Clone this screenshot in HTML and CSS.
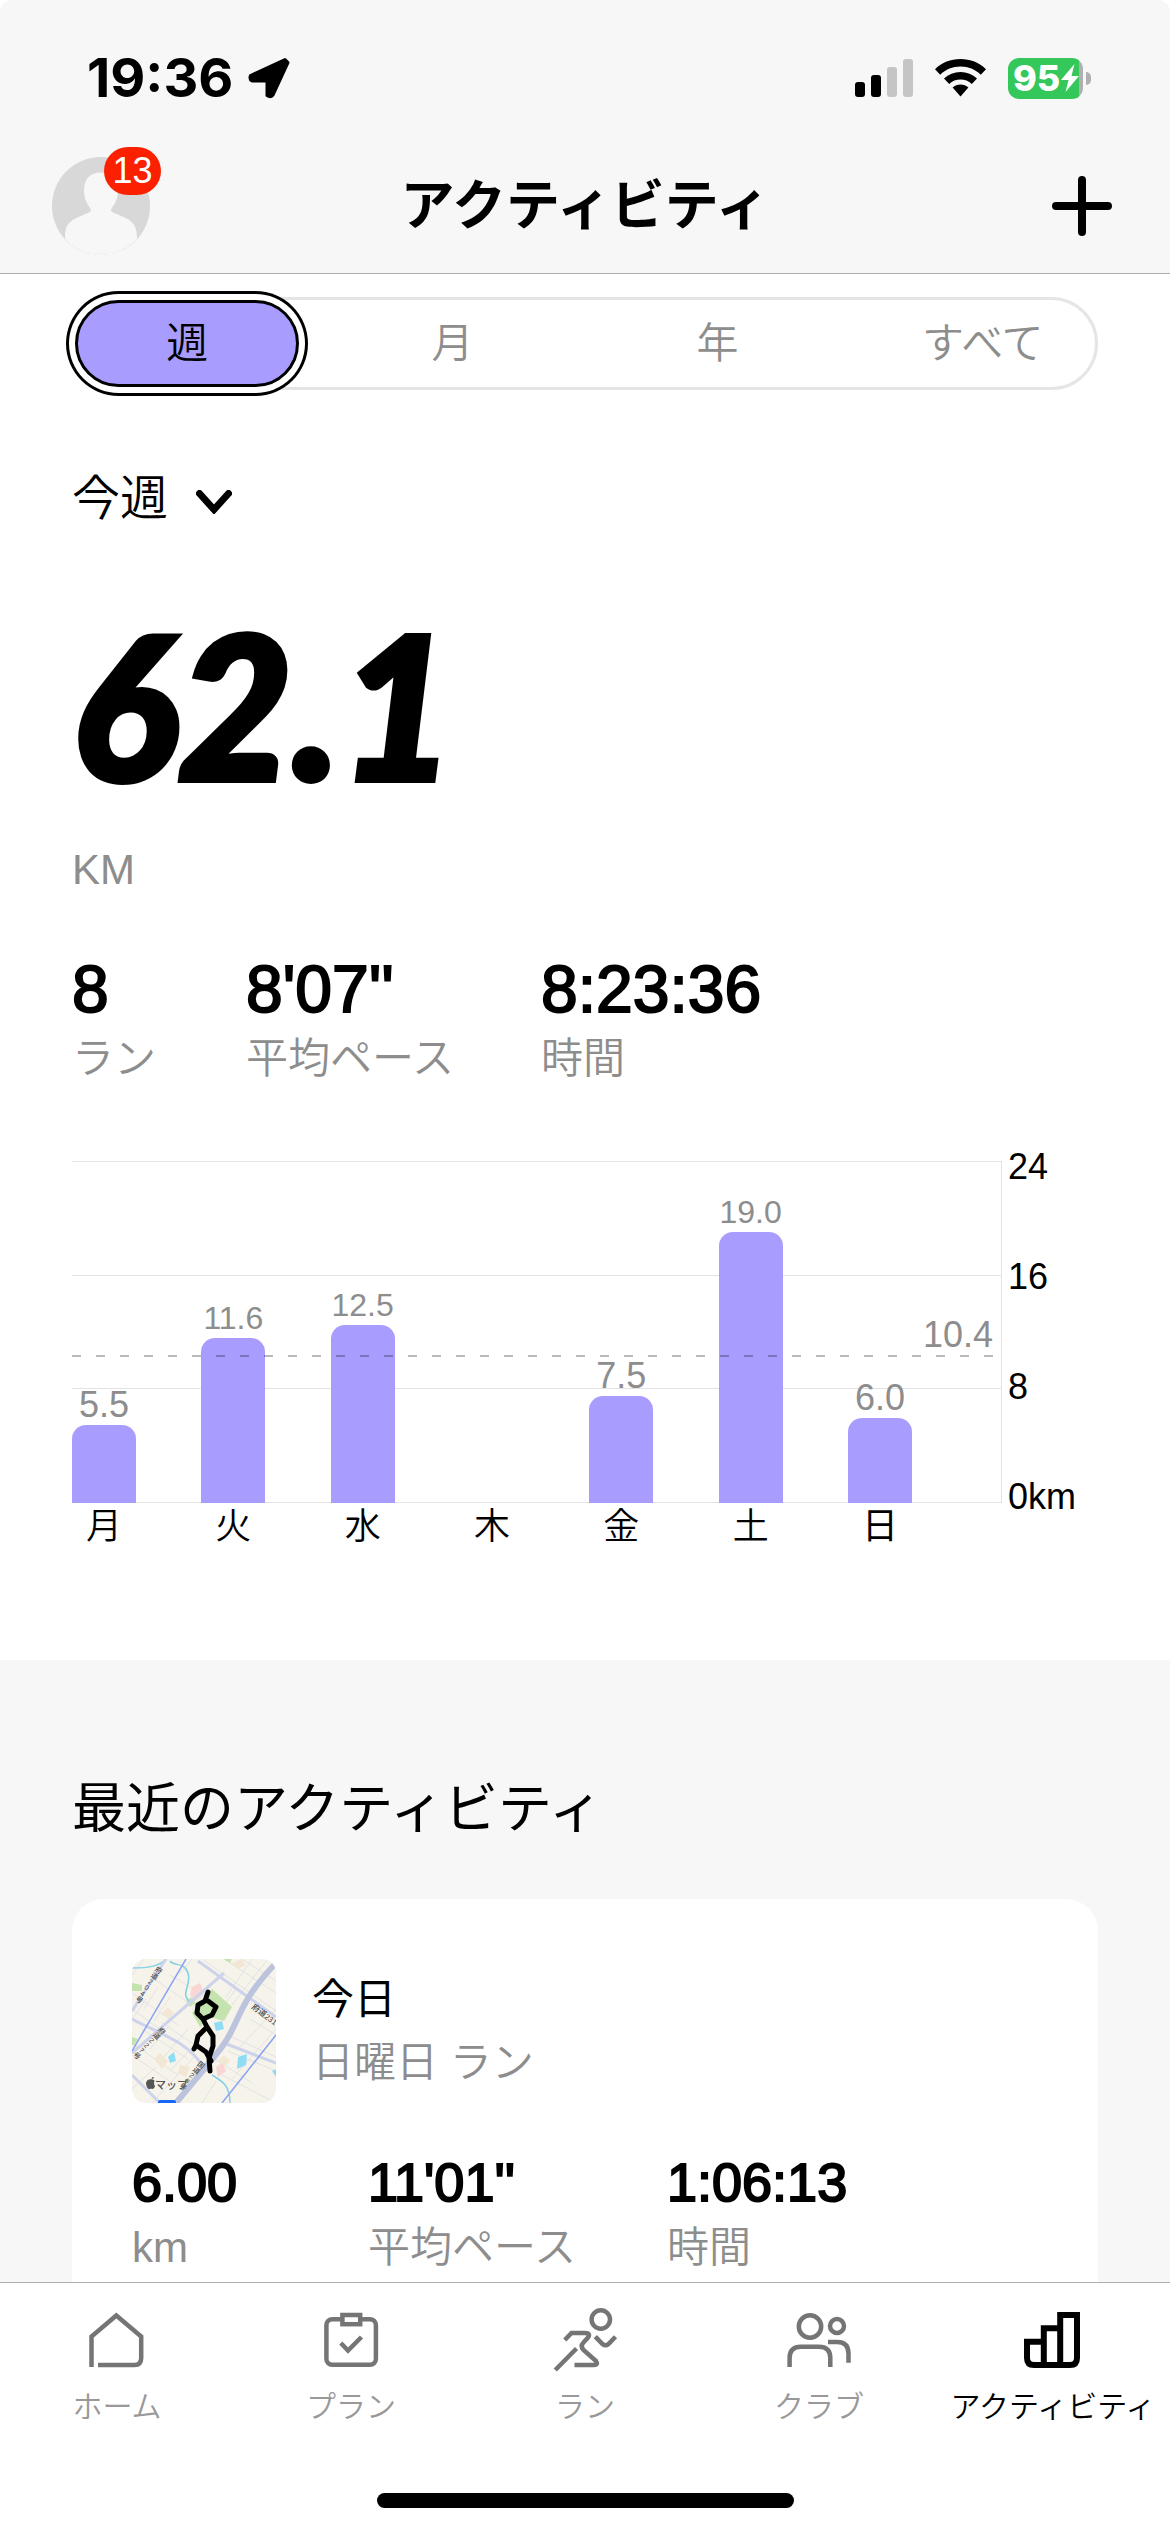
FILE: index.html
```html
<!DOCTYPE html>
<html lang="ja">
<head>
<meta charset="utf-8">
<meta name="viewport" content="width=device-width, initial-scale=1">
<title>アクティビティ</title>
<link rel="stylesheet" href="styles.css">
</head>
<body>
<div class="app">
  <header class="header">
    <div class="status">
      <div class="status-left">
        <span class="clock">19:36</span>
        <svg class="location" viewBox="0 0 42 42" aria-hidden="true"><path d="M37 2.500 40 5.500 25 38Q22.500 41 19 38.500V24H4Q1 22.500 2.500 18.500Z" fill="#000" stroke="#000" stroke-width="3" stroke-linejoin="round"/></svg>
      </div>
      <div class="status-right">
        <svg class="signal" viewBox="0 0 58 38" aria-hidden="true">
          <rect x="0" y="23" width="10" height="15" rx="3"/><rect x="16" y="16" width="10" height="22" rx="3"/>
          <rect x="32" y="8" width="10" height="30" rx="3" fill="#c5c5c5"/><rect x="48" y="0" width="10" height="38" rx="3" fill="#c5c5c5"/>
        </svg>
        <svg class="wifi" viewBox="0 0 51 38" aria-hidden="true">
          <path d="M25.500 0C35.500 0 44 3.600 51 10.200L45.800 15.700C40.200 10.500 33.400 7.600 25.500 7.600S10.800 10.500 5.200 15.700L0 10.200C7 3.600 15.500 0 25.500 0Z"/>
          <path d="M25.500 13C32 13 37.500 15.300 42 19.400L36.800 24.900C33.700 22.100 29.900 20.600 25.500 20.600S17.300 22.100 14.200 24.900L9 19.400C13.500 15.300 19 13 25.500 13Z"/>
          <path d="M25.500 25.600C28.600 25.600 31.200 26.600 33.400 28.500L25.500 37.500L17.600 28.500C19.800 26.600 22.400 25.600 25.500 25.600Z"/>
        </svg>
        <div class="battery">
          <span class="battery-body">95<svg class="bolt" viewBox="0 0 18 28" aria-hidden="true"><path d="M13.500 0 0 16H7.500L4.500 28 18 12H10.500Z" fill="#fff"/></svg></span>
          <span class="battery-cap"></span>
        </div>
      </div>
    </div>
    <div class="navbar">
      <button class="avatar" type="button" aria-label="プロフィール">
        <svg viewBox="0 0 98 98" aria-hidden="true">
          <circle cx="49" cy="49" r="49" fill="#d8d8d8"/>
          <path d="M13 81C13 65 20 63 31 58C36 56 39 55 39 53C39 51 32 45 32 34C32 22 38 15.500 49 15.500S66 22 66 34C66 45 59 51 59 53C59 55 62 56 67 58C78 63 85 65 85 81A49 49 0 0 1 13 81Z" fill="#f7f7f7"/>
          <path d="M13 81.500A48.500 48.500 0 0 0 85 81.500" fill="none" stroke="#fff"/>
        </svg>
        <span class="badge">13</span>
      </button>
      <h1 class="title">アクティビティ</h1>
      <button class="add" type="button" aria-label="追加">
        <svg viewBox="0 0 60 60" aria-hidden="true"><path d="M30 4V56M4 30H56" stroke="#000" stroke-width="8" stroke-linecap="round"/></svg>
      </button>
    </div>
  </header>

  <main class="content">
    <section class="summary">
      <div class="segments" role="radiogroup" aria-label="期間">
        <label class="segment"><input type="radio" name="range" checked><span>週</span></label>
        <label class="segment"><input type="radio" name="range"><span>月</span></label>
        <label class="segment"><input type="radio" name="range"><span>年</span></label>
        <label class="segment"><input type="radio" name="range"><span>すべて</span></label>
      </div>

      <label class="period">
        <select aria-label="表示する週"><option>今週</option></select>
        <svg viewBox="0 0 36 24" aria-hidden="true"><path d="M3.500 3.500 18 19.500 32.500 3.500" fill="none" stroke="#000" stroke-width="7" stroke-linecap="round"/></svg>
      </label>

      <p class="total">62.1</p>
      <p class="unit">KM</p>

      <dl class="stats stats-large">
        <div><dt>ラン</dt><dd>8</dd></div>
        <div><dt>平均ペース</dt><dd>8'07''</dd></div>
        <div><dt>時間</dt><dd>8:23:36</dd></div>
      </dl>

      <div class="chart">
        <div class="plot">
          <div class="gridlines"><i></i><i></i><i></i></div>
          <ul class="bars">
            <li><span class="value">5.5</span><span class="bar" style="height:22.900%"></span></li>
            <li><span class="value value-long">11.6</span><span class="bar" style="height:48.300%"></span></li>
            <li><span class="value value-long">12.5</span><span class="bar" style="height:52.100%"></span></li>
            <li></li>
            <li><span class="value">7.5</span><span class="bar" style="height:31.300%"></span></li>
            <li><span class="value value-long">19.0</span><span class="bar" style="height:79.300%"></span></li>
            <li><span class="value">6.0</span><span class="bar" style="height:25%"></span></li>
          </ul>
          <div class="average" style="bottom:42.700%"><span>10.4</span></div>
        </div>
        <div class="axis"><span>24</span><span>16</span><span>8</span><span>0km</span></div>
        <div class="days"><span>月</span><span>火</span><span>水</span><span>木</span><span>金</span><span>土</span><span class="today">日</span></div>
      </div>
    </section>

    <section class="recent">
      <h2>最近のアクティビティ</h2>
      <article class="card">
        <div class="card-head">
          <svg class="map" viewBox="0 0 144 144" role="img" aria-label="ルート">
            <rect width="144" height="144" fill="#f6f3ea"/>
            <g fill="none" stroke="#e2e2e6" stroke-width="1">
              <path d="M0 34 46 66M0 50 30 72M12 0 0 16M22 20 60 46M38 16 68 34M70 0 144 52M92 0 144 34M110 0 144 22M84 20 60 50M104 30 88 52M120 0 94 38M136 0 100 46M144 50 106 90M144 70 100 120M118 60 144 76M100 78 144 98M96 92 144 112M80 98 120 124M90 116 144 144M0 84 46 116M0 96 40 124M10 70 56 100M30 64 66 88M18 90 38 66M30 100 56 70M40 110 64 84M0 130 24 108M20 144 62 98M44 144 76 110M70 144 84 122M60 0 48 14M26 28 12 50M38 38 22 62M0 60 14 40"/>
            </g>
            <g fill="#f2e7d5"><path d="M30 54 36 48 42 54 36 60Z"/><path d="M22 100 28 94 36 102 30 110Z"/><path d="M48 106 58 108 54 118 46 114Z"/><path d="M100 4 110 0 114 6 106 10Z"/><path d="M86 102 92 96 98 102 92 108Z"/></g>
            <g fill="#c5e3ae"><path d="M80 30 100 48 92 62 78 58 68 68 60 54Z"/><path d="M54 42 60 38 64 44 58 48Z"/><path d="M0 24 10 26 10 32 0 32Z"/><path d="M0 78 6 80 2 86 0 86Z"/><path d="M92 0H100L98 4Z"/></g>
            <g fill="#f9d5d4"><path d="M60 28 68 24 72 34 64 42 58 36Z"/><path d="M84 108 90 104 94 112 86 118Z"/></g>
            <g fill="#8fdcf5"><path d="M82 64 90 62 92 70 84 72Z"/><path d="M106 98 115 95 114 106 105 110Z"/><path d="M36 98 42 93 44 102 38 104Z"/><path d="M140 112 144 110V118Z"/></g>
            <path d="M0 9C18 9 28 7 34 0M38 2C42 8 52 2 56 14C60 26 48 34 57 42M80 116C90 122 98 126 98 144" fill="none" stroke="#83cfe3" stroke-width="1.500"/>
            <g fill="none" stroke="#ced3ec" stroke-width="3">
              <path d="M66 2 144 58M34 0 0 52M92 14 0 94M0 60C30 76 54 82 70 106M0 116 28 144M92 84 144 104"/>
            </g>
            <path d="M144 4C100 50 110 66 82 98L44 144" fill="none" stroke="#bcc3dd" stroke-width="6"/>
            <path d="M54 0 0 92M144 76 90 144" fill="none" stroke="#8ba4f0" stroke-width="1.500"/>
            <rect x="26" y="141" width="18" height="6" rx="2" fill="#1769f5"/>
            <g class="map-labels">
              <text class="map-vertical" transform="translate(28 8) rotate(33)">府道204号</text>
              <text class="map-vertical" transform="translate(32 69) rotate(45)">府道227号</text>
              <text class="map-vertical" transform="translate(71 103) rotate(40)">国道28号</text>
              <text transform="translate(119 49) rotate(37)">府道231</text>
            </g>
            <path d="M76 33 73 42 66 46 65 54 71 60 80 56 84 48 76 42M71 60 75 68 81 77 81 87 77 99 78 112M75 68 66 77 64 86 62 90M64 86 74 93 79 102" fill="none" stroke="#000" stroke-width="5" stroke-linejoin="round" stroke-linecap="round"/>
            <path d="M20 120C21 120 22 119 22 118C20 118 19 119 20 120ZM22 124C22 122 23 122 22 121C20 120 15 119 14 124C14 127 16 131 18 130C20 129 21 131 22 129Q23 128 23 127Q22 126 22 124Z" fill="#555"/>
            <text class="map-brand" x="23" y="130">マップ</text>
          </svg>
          <div class="card-title">
            <h3>今日</h3>
            <p>日曜日 ラン</p>
          </div>
        </div>
        <dl class="stats stats-small">
          <div><dt>km</dt><dd>6.00</dd></div>
          <div><dt>平均ペース</dt><dd>11'01''</dd></div>
          <div><dt>時間</dt><dd>1:06:13</dd></div>
        </dl>
      </article>
    </section>
  </main>

  <nav class="tabbar">
    <div class="tabs">
      <a href="#home"><svg viewBox="0 0 72 72" aria-hidden="true"><path d="M10.500 63V32.500L35.300 11.500 60.200 32.500V54Q60.200 61 53.500 61H17"/></svg><span>ホーム</span></a>
      <a href="#plan"><svg viewBox="0 0 72 72" aria-hidden="true"><rect x="11.400" y="15.200" width="49.500" height="45.600" rx="6"/><rect x="27.400" y="11" width="17.800" height="9.200" fill="#fff"/><path d="M25.800 39 33 46.500 46.500 33"/></svg><span>プラン</span></a>
      <a href="#run"><svg viewBox="0 0 72 72" aria-hidden="true"><circle cx="51.800" cy="15.500" r="9.200"/><path d="M15.800 36 22.500 29H36Q42 29 39 33.500L34.500 38.500Q31 42 34.500 46L47 57Q49.500 61 45 61H25.500M27.500 44.500 6.300 66M46.300 32.700 53.500 40Q56.500 42.500 59.500 40L66.500 32.700"/></svg><span>ラン</span></a>
      <a href="#club"><svg viewBox="0 0 72 72" aria-hidden="true"><circle cx="27" cy="22.500" r="11.200"/><circle cx="54" cy="22" r="7"/><path d="M6.600 63V54Q6.600 42.700 18 42.700H36Q47.300 42.700 47.300 54V63M45 38H54Q65.500 38 65.500 49.500V58.700"/></svg><span>クラブ</span></a>
      <a href="#activity" class="current" aria-current="page"><svg viewBox="0 0 72 72" aria-hidden="true"><path d="M26.800 61V24.300H43.200M43.200 61V11H60V54Q60 61 53 61H17Q10 61 10 54V37.700H26.800"/></svg><span>アクティビティ</span></a>
    </div>
    <div class="home-indicator"></div>
  </nav>
</div>
</body>
</html>
```
FILE: styles.css
```css
* { box-sizing: border-box; }

body {
  margin: 0;
  background: #fff;
  color: #000;
  font-family: "Liberation Sans", "Noto Sans CJK JP", sans-serif;
  font-weight: 350;
  font-size: 42px;
}

h1, h2, h3, p, dl, dd, ul { margin: 0; padding: 0; }
button, select { border: 0; background: none; padding: 0; font: inherit; color: inherit; }
svg { display: block; flex: none; }

.app { display: flex; flex-direction: column; height: 100vh; }

/* Header */
.header {
  flex: none;
  padding-bottom: 17px;
  background: #f7f7f7;
  border-bottom: 1px solid #adadad;
  border-radius: 12px 12px 0 0;
}
.status {
  display: flex;
  justify-content: space-between;
  align-items: center;
  height: 156px;
  padding: 0 79px 0 87px;
}
.status-left, .status-right, .battery { display: flex; align-items: center; }
.status-left { gap: 15px; }
.clock { font-family: Inter, sans-serif; font-weight: 700; font-size: 54px; line-height: 60px; }
.location { width: 42px; height: 42px; }
.status-right { gap: 22px; }
.signal { width: 58px; height: 38px; }
.wifi { width: 51px; height: 38px; }
.battery { gap: 3px; }
.battery-body {
  display: flex;
  align-items: center;
  gap: 1px;
  width: 75px;
  height: 41px;
  padding-left: 5px;
  border-radius: 11px;
  background: linear-gradient(to right, #34c759 95%, #b0b0b0 95%);
  color: #fff;
  font-family: Inter, sans-serif;
  font-weight: 800;
  font-size: 36px;
}
.bolt { width: 18px; height: 28px; }
.battery-cap { width: 5px; height: 13px; border-radius: 0 5px 5px 0; background: #b0b0b0; }

.navbar {
  display: grid;
  grid-template-columns: 1fr auto 1fr;
  align-items: center;
  height: 100px;
  padding: 0 52px;
}
.avatar { position: relative; width: 98px; height: 98px; }
.avatar svg { width: 98px; height: 98px; }
.badge {
  position: absolute;
  top: -10px;
  left: 52px;
  min-width: 57px;
  border-radius: 24px;
  background: #fb2000;
  color: #fff;
  font-size: 36px;
  line-height: 48px;
  text-align: center;
}
.title { font-size: 54px; font-weight: 700; line-height: 80px; }
.add { display: grid; place-items: center; justify-self: end; width: 72px; height: 72px; }
.add svg { width: 60px; height: 60px; }

/* Weekly summary */
.content { flex: 1; min-height: 0; overflow-y: auto; scrollbar-width: none; }
.summary { padding: 23px 72px 111px; }

.segments {
  display: flex;
  justify-content: space-between;
  border: 3px solid #e5e5e5;
  border-radius: 47px;
}
.segment { position: relative; width: 22%; color: #8d8d8d; line-height: 81px; text-align: center; }
.segment input { position: absolute; opacity: 0; margin: 0; }
.segment span { display: block; border: 3px solid transparent; border-radius: 44px; }
.segment input:checked + span {
  border-color: #000;
  background: #a89dff;
  box-shadow: 0 0 0 6px #fff, 0 0 0 9px #000;
  color: #000;
}

.period { display: flex; align-items: center; gap: 27px; margin-top: 79px; }
.period select { appearance: none; height: 60px; font-size: 48px; line-height: 60px; }
.period svg { width: 36px; height: 24px; margin-top: 6px; }

.total {
  margin-top: 75px;
  font-family: Lato, sans-serif;
  font-style: italic;
  font-weight: 900;
  font-size: 198px;
  line-height: 200px;
  -webkit-text-stroke: 6px #000;
}
.unit { margin-top: 41px; color: #8d8d8d; line-height: 50px; }

.stats { display: grid; }
.stats div { display: flex; flex-direction: column-reverse; }
.stats dt { padding-top: 4px; color: #8d8d8d; line-height: 60px; }
.stats dd { -webkit-text-stroke: 2px #000; }
.stats-large { grid-template-columns: 174px 295px 1fr; margin-top: 58px; }
.stats-large dd { font-size: 66px; line-height: 72px; }
.stats-small { grid-template-columns: 236px 299px 1fr; margin-top: 47px; }
.stats-small dd { font-size: 54px; line-height: 64px; }

/* Bar chart */
.chart { display: grid; grid-template-columns: 1fr 96px; margin-top: 58px; font-size: 36px; }
.plot { position: relative; height: 342px; margin-top: 14px; border-right: 1px solid #e3e3e3; }
.gridlines {
  position: absolute;
  inset: 0;
  display: grid;
  grid-template-rows: repeat(3, 1fr);
  border-bottom: 1px solid #e3e3e3;
}
.gridlines i { border-top: 1px solid #e3e3e3; }
.bars {
  position: relative;
  display: flex;
  justify-content: space-between;
  height: 100%;
  padding-right: 89px;
  list-style: none;
}
.bars li { display: flex; flex-direction: column; justify-content: flex-end; align-items: center; width: 64px; }
.bar { flex: none; width: 100%; border-radius: 14px 14px 0 0; background: #a89dff; }
.value { color: #8d8d8d; line-height: 40px; }
.value-long { font-size: 32px; }
.average {
  position: absolute;
  left: 0;
  right: 6px;
  height: 2px;
  background: repeating-linear-gradient(to right, rgba(0, 0, 0, 0.27) 0 9px, transparent 9px 24px);
}
.average span { position: absolute; right: 2px; bottom: 2px; color: #8d8d8d; line-height: 40px; }
.axis {
  grid-row: span 2;
  align-self: start;
  display: flex;
  flex-direction: column;
  gap: 70px;
  padding-left: 6px;
  line-height: 40px;
}
.days { display: flex; justify-content: space-between; padding: 2px 90px 0 0; line-height: 44px; }
.days span { width: 64px; text-align: center; }
.days .today { font-weight: 400; }

/* Recent activities */
.recent { padding: 109px 72px 72px; background: #f7f7f7; }
.recent h2 { font-size: 54px; font-weight: 400; line-height: 80px; }
.card { margin-top: 50px; padding: 60px; border-radius: 32px; background: #fff; }
.card-head { display: flex; align-items: center; gap: 36px; }
.map { width: 144px; height: 144px; border-radius: 14px; }
.map-labels { fill: #444; font-size: 8px; font-weight: 500; }
.map-vertical { font-size: 7px; writing-mode: vertical-rl; text-orientation: upright; }
.map-brand { fill: #555; font-size: 11px; font-weight: 500; }
.card-title h3 { font-size: 42px; font-weight: 400; line-height: 63px; }
.card-title p { color: #8d8d8d; line-height: 63px; }

/* Tab bar */
.tabbar { flex: none; padding: 21px 0 24px; border-top: 1px solid #adadad; background: #fff; }
.tabs { display: grid; grid-template-columns: repeat(5, 1fr); }
.tabs a {
  display: flex;
  flex-direction: column;
  align-items: center;
  gap: 9px;
  color: #999;
  font-size: 30px;
  line-height: 44px;
  text-decoration: none;
  white-space: nowrap;
}
.tabs svg { width: 72px; height: 72px; fill: none; stroke: #757575; stroke-width: 4.500; }
.tabs .current { color: #000; }
.tabs .current svg { stroke: #000; stroke-width: 6; }
.home-indicator { width: 417px; height: 15px; margin: 64px auto 0; border-radius: 8px; background: #000; }
```
